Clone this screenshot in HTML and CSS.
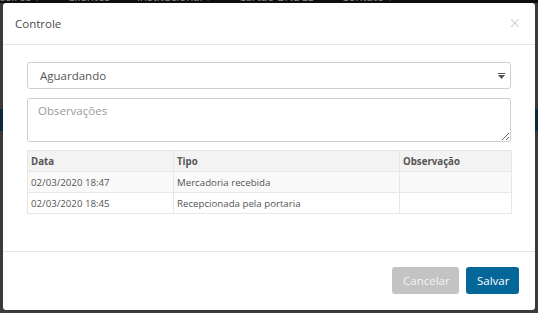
FILE: index.html
```html
<!DOCTYPE html>
<html lang="pt-BR">
<head>
<meta charset="utf-8">
<title>Controle</title>
<link rel="stylesheet" href="styles.css">
</head>
<body>
<div class="page">
  <nav class="nav">
    <div class="nav-inner">
      <span class="nav-item first">Financeiros ▾</span>
      <span class="nav-item">Clientes</span>
      <span class="nav-item">Institucional ▾</span>
      <span class="nav-item">Cartão BNDES</span>
      <span class="nav-item">Contato ▾</span>
    </div>
  </nav>
  <div class="band"></div>
</div>

<div class="modal">
  <div class="modal-header">
    <h4 class="modal-title">Controle</h4>
    <span class="close">×</span>
  </div>
  <div class="modal-body">
    <div class="select">
      <span class="select-value">Aguardando</span>
      <svg class="select-arrow" width="7" height="6" viewBox="0 0 7 6"><rect x="0" y="0" width="7" height="1" fill="#555"/><path d="M0 2 L7 2 L3.5 6 Z" fill="#555"/></svg>
    </div>
    <textarea class="textarea" placeholder="Observações"></textarea>
    <table class="grid">
      <colgroup>
        <col class="c1"><col class="c2"><col class="c3">
      </colgroup>
      <thead>
        <tr><th>Data</th><th>Tipo</th><th>Observação</th></tr>
      </thead>
      <tbody>
        <tr class="odd"><td>02/03/2020 18:47</td><td>Mercadoria recebida</td><td></td></tr>
        <tr><td>02/03/2020 18:45</td><td>Recepcionada pela portaria</td><td></td></tr>
      </tbody>
    </table>
  </div>
  <div class="modal-footer">
    <button class="btn btn-cancel">Cancelar</button>
    <button class="btn btn-save">Salvar</button>
  </div>
</div>
</body>
</html>
```

FILE: styles.css
```css
html, body {
  margin: 0;
  padding: 0;
}
body {
  width: 538px;
  height: 313px;
  overflow: hidden;
  position: relative;
  background: #3a3a3a;
  font-family: "Open Sans", "Liberation Sans", sans-serif;
}
.page {
  height: 313px;
}
.nav {
  height: 3px;
  overflow: hidden;
  background: #0e0e0e;
}
.nav-inner {
  display: flex;
  margin-top: -10px;
  font-size: 11.5px;
  line-height: 13px;
  color: #8a8a8a;
  white-space: nowrap;
}
.nav-item {
  margin-right: 27px;
}
.nav-item.first {
  margin-left: -30px;
}
.band {
  margin-top: 106px;
  height: 22px;
  background: #0b2a40;
}

.modal {
  position: absolute;
  left: 3px;
  top: 3px;
  width: 532px;
  height: 307px;
  background: #fff;
  border-radius: 3px;
  display: flex;
  flex-direction: column;
  box-sizing: border-box;
}
.modal-header {
  height: 42px;
  box-sizing: border-box;
  border-bottom: 1px solid #e5e5e5;
  display: flex;
  align-items: center;
  justify-content: space-between;
  padding: 0 14px 0 12px;
}
.modal-title {
  margin: 0;
  font-size: 11.5px;
  font-weight: 500;
  color: #4a4a4a;
}
.close {
  font-size: 15px;
  line-height: 15px;
  color: #c8c8c8;
  font-family: "DejaVu Sans", sans-serif;
  font-weight: 300;
}
.modal-body {
  flex: 1;
  padding: 17px 24px 0 24px;
  display: flex;
  flex-direction: column;
}
.select {
  height: 27px;
  box-sizing: border-box;
  border: 1px solid #cfcfcf;
  border-radius: 3px;
  display: flex;
  align-items: center;
  justify-content: space-between;
  padding: 0 5px 0 12px;
}
.select-value {
  font-size: 11.5px;
  color: #555;
}
.select-arrow {
  display: block;
}
.textarea {
  margin-top: 9px;
  height: 44px;
  box-sizing: border-box;
  border: 1px solid #cfcfcf;
  border-radius: 3px;
  padding: 4px 10px;
  font-family: "Open Sans", "Liberation Sans", sans-serif;
  font-size: 11.5px;
  color: #555;
  resize: vertical;
  outline: none;
}
.textarea::placeholder {
  color: #9a9a9a;
}
.grid {
  margin-top: 8px;
  width: 484px;
  border-collapse: collapse;
  table-layout: fixed;
  font-size: 9.7px;
  color: #555;
}
.c1 { width: 146px; }
.c2 { width: 226px; }
.c3 { width: 112px; }
.grid th, .grid td {
  height: 21px;
  box-sizing: border-box;
  border: 1px solid #e6e6e6;
  padding: 0 3px;
  text-align: left;
  white-space: nowrap;
}
.grid th {
  background: #f3f3f3;
  font-weight: 700;
  color: #555;
}
.grid tr.odd td {
  background: #f9f9f9;
}
.modal-footer {
  height: 59px;
  box-sizing: border-box;
  border-top: 1px solid #e5e5e5;
  display: flex;
  justify-content: flex-end;
  align-items: flex-start;
  gap: 7px;
  padding: 15px 16px 0 0;
}
.btn {
  height: 27px;
  border: 0;
  border-radius: 3px;
  font-family: "Open Sans", "Liberation Sans", sans-serif;
  font-size: 11.5px;
  color: #fff;
  padding: 0 11px;
}
.btn-cancel {
  background: #c3c3c3;
  color: #f4f4f4;
  width: 67px;
}
.btn-save {
  background: #04679a;
  width: 53px;
}
```
